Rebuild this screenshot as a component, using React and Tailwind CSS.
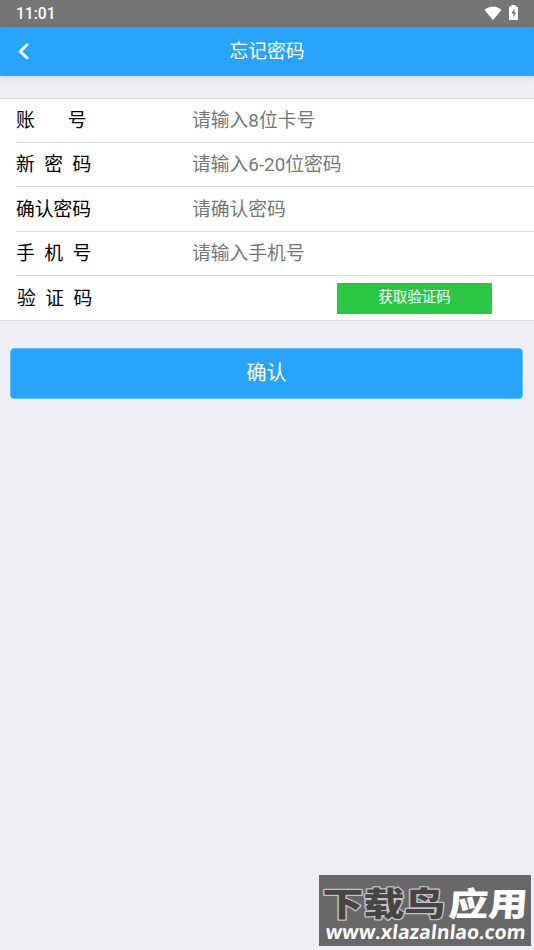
const fields = [
  { label: ["账", "号"], gap: "gap-[33px]", placeholder: "请输入8位卡号", height: "h-[44px]" },
  { label: ["新", "密", "码"], gap: "gap-[9.5px]", placeholder: "请输入6-20位密码", height: "h-[44px] pt-px" },
  { label: ["确认密码"], gap: "gap-0", placeholder: "请确认密码", height: "h-[45px] pt-px" },
  { label: ["手", "机", "号"], gap: "gap-[9.5px]", placeholder: "请输入手机号", height: "h-[44px] pt-px" },
];

function StatusBar() {
  return (
    <div className="flex h-[27px] items-center bg-[#757575] pr-4 pl-4 text-white">
      <span className="pt-[3px] text-[15.6px] leading-none font-medium">11:01</span>
      <svg className="mr-[7px] mb-[2px] ml-auto h-[14px] w-[18px]" viewBox="0 0 18 14" fill="currentColor">
        <path d="M.5 4C5.500-.7 12.500-.7 17.500 4L9 14Z" />
      </svg>
      <svg className="mb-[2px] h-[15px] w-[9px]" viewBox="0 0 9 15">
        <path fill="#fff" d="M2.500 0h4v1.500H8a1 1 0 0 1 1 1V14a1 1 0 0 1-1 1H1a1 1 0 0 1-1-1V2.500a1 1 0 0 1 1-1h1.500Z" />
        <path fill="#757575" d="M5.500 3.600 2.400 8.600h1.900v4l2.700-5.200H5.300Z" />
      </svg>
    </div>
  );
}

function Header() {
  return (
    <header className="relative z-10 flex h-[49px] items-center bg-[#28a4fa] px-[18px] text-white shadow-[0_1px_6px_rgba(0,0,0,0.14)]">
      <button className="flex w-6 pb-px">
        <svg className="h-[18px] w-[11px]" viewBox="0 0 11 18" fill="none" stroke="currentColor" strokeWidth="2.8">
          <path d="M9.800 2 2.300 9.400 9.800 16.800" />
        </svg>
      </button>
      <h1 className="flex-1 pt-px pr-6 text-center text-[18.8px] leading-7">忘记密码</h1>
    </header>
  );
}

function Label({ parts, gap }) {
  return (
    <div className={`flex w-[176px] shrink-0 text-black ${gap}`}>
      {parts.map((part) => (
        <span key={part}>{part}</span>
      ))}
    </div>
  );
}

// Site stamp in the bottom right corner
function Watermark() {
  return (
    <div className="absolute right-[3px] bottom-[4px] h-[71px] w-[212px] bg-[#686868]">
      <svg className="block h-full w-full overflow-visible" viewBox="0 0 212 71">
        <g fontFamily="'Noto Sans CJK SC', sans-serif" fontWeight="900" fontSize="33" strokeLinejoin="round">
          <text transform="translate(3.500 41) scale(1.24 1)" fill="#454545" stroke="#c4c4c4" strokeWidth="2.4" paintOrder="stroke">
            下载鸟
          </text>
          <text transform="translate(129 41) skewX(-4) scale(1.2 1)" fill="#fff">
            应用
          </text>
        </g>
        <text
          transform="translate(6 64) skewX(-6)"
          textLength="200"
          lengthAdjust="spacingAndGlyphs"
          fontFamily="'Open Sans', sans-serif"
          fontWeight="700"
          fontSize="19.5"
          fill="#fff"
        >
          www.xlazalnlao.com
        </text>
      </svg>
    </div>
  );
}

export default function App() {
  return (
    <div className="relative h-[950px] w-full overflow-hidden bg-[#efeef4] font-[Roboto,'Noto_Sans_CJK_SC',sans-serif]">
      <StatusBar />
      <Header />

      <form className="mt-[22px] border-y border-[#dddde0] bg-white pl-4 text-[18.8px] leading-7">
        {fields.map((field) => (
          <div key={field.placeholder} className={`flex items-center border-b border-[#dedede] ${field.height}`}>
            <Label parts={field.label} gap={field.gap} />
            <input
              className="h-7 min-w-0 flex-1 outline-none placeholder:text-[#777]"
              placeholder={field.placeholder}
            />
          </div>
        ))}
        <div className="flex h-[44px] items-center pt-px pl-px">
          <Label parts={["验", "证", "码"]} gap="gap-[9.5px]" />
          <button
            type="button"
            className="mr-[42px] ml-auto h-[31px] w-[155px] bg-[#2cc845] pb-px text-[14.5px] leading-7 text-white"
          >
            获取验证码
          </button>
        </div>
      </form>

      <div className="pr-[11px] pl-[10px] pt-[27px]">
        <button className="h-[51px] w-full rounded-[4px] border border-[#63bdfb] bg-[#28a4fa] pb-px text-[20px] text-white">
          确认
        </button>
      </div>

      <Watermark />
    </div>
  );
}
